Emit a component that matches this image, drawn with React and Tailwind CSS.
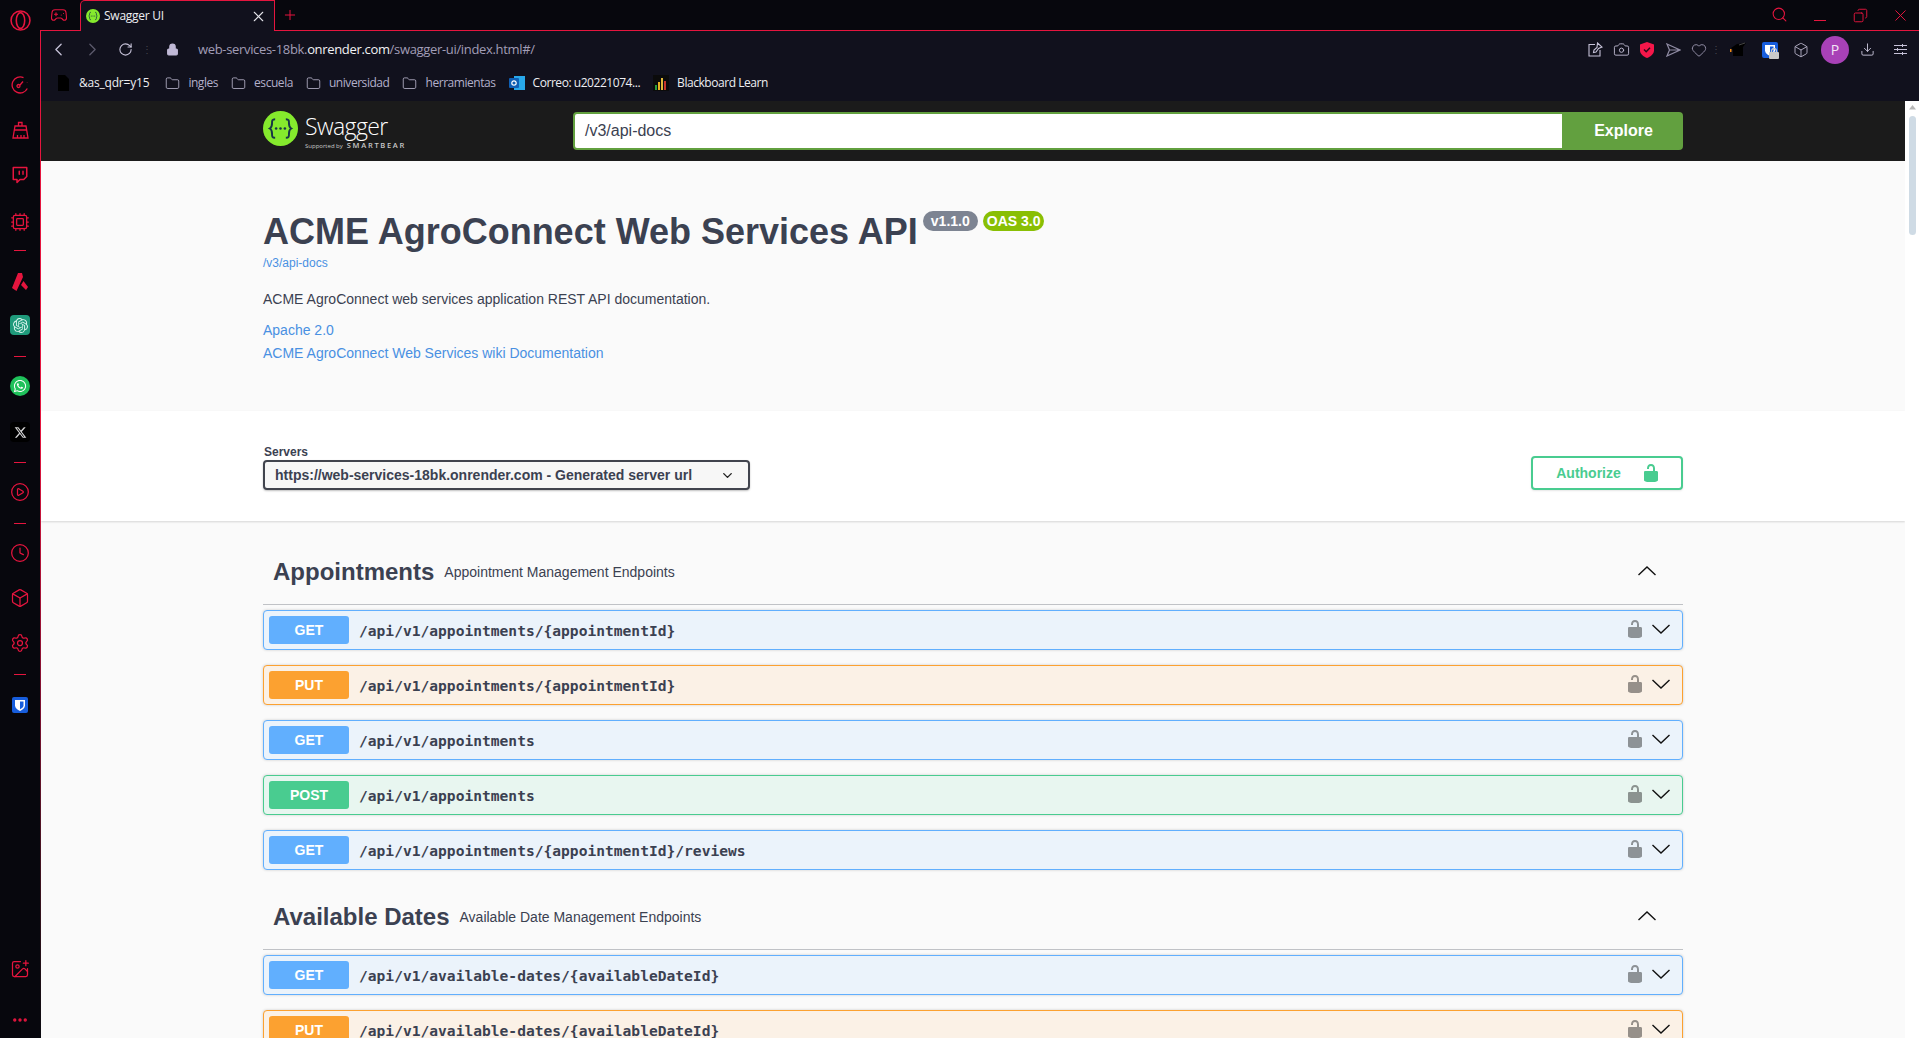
import { Twitch, Cpu, CirclePlay, Clock, Box, Settings, ImagePlus, Ellipsis, Gamepad2, X, Plus, ChevronLeft, ChevronRight, RotateCw, Lock, Folder, Search, Copy, Camera, Heart, Download, ChevronDown } from 'lucide-react';
import { FaWhatsapp, FaXTwitter } from 'react-icons/fa6';
import { SiOpenai } from 'react-icons/si';

const lockPath = "M15.8 8H14V5.6C14 2.703 12.665 1 10 1 7.334 1 6 2.703 6 5.6V6h2v-.801C8 3.754 8.797 3 10 3c1.203 0 2 .754 2 2.199V8H4c-.553 0-1 .646-1 1.199V17c0 .549.428 1.139.951 1.307l1.197.387C5.672 18.861 6.55 19 7.1 19h5.8c.549 0 1.428-.139 1.951-.307l1.196-.387c.524-.167.953-.757.953-1.306V9.199C17 8.646 16.352 8 15.8 8z";

const methodStyles = {
    GET: { block: 'border-[#61affe] bg-[#ebf3fb]', badge: 'bg-[#61affe]' },
    PUT: { block: 'border-[#fca130] bg-[#fbf1e6]', badge: 'bg-[#fca130]' },
    POST: { block: 'border-[#49cc90] bg-[#e8f6f0]', badge: 'bg-[#49cc90]' },
};

const appointments = [
    ['GET', '/api/v1/appointments/{appointmentId}'],
    ['PUT', '/api/v1/appointments/{appointmentId}'],
    ['GET', '/api/v1/appointments'],
    ['POST', '/api/v1/appointments'],
    ['GET', '/api/v1/appointments/{appointmentId}/reviews'],
];

const availableDates = [
    ['GET', '/api/v1/available-dates/{availableDateId}'],
    ['PUT', '/api/v1/available-dates/{availableDateId}'],
];

function SwaggerMark({ size }) {
    return (
        <svg width={size} height={size} viewBox="0 0 36 36">
            <circle cx="18" cy="18" r="18" fill="#85ea2d" />
            <path d="M12.5 8.5c-3.5 0-3.2 2-3.2 4.2 0 2.6-.3 4.2-2.3 5.3 2 1.1 2.3 2.700 2.300 5.300 0 2.200-.3 4.200 3.200 4.200M23.500 8.500c3.500 0 3.200 2 3.200 4.200 0 2.600.3 4.200 2.300 5.300-2 1.100-2.300 2.700-2.300 5.300 0 2.200.3 4.200-3.200 4.200" fill="none" stroke="#173647" strokeWidth="2" />
            <circle cx="13.500" cy="18" r="1.300" fill="#173647" />
            <circle cx="18" cy="18" r="1.300" fill="#173647" />
            <circle cx="22.500" cy="18" r="1.300" fill="#173647" />
        </svg>
    );
}

function BitwardenIcon({ size, locked }) {
    return (
        <div className="relative">
            <svg width={size} height={size} viewBox="0 0 16 16">
                <rect width="16" height="16" rx="2" fill="#175ddc" />
                <path d="M3 3h10v5.500c0 2.500-2.500 4.500-5 5.500-2.500-1-5-3-5-5.500z" fill="#fff" />
                <path d="M8 4.500h3.500v4c0 1.800-1.800 3-3.500 3.800z" fill="#175ddc" />
            </svg>
            {locked && (
                <svg className="absolute -bottom-[1px] -right-[1px]" width="10" height="11" viewBox="0 0 10 11">
                    <rect y="4" width="10" height="7" rx="1" fill="#c9c9c9" />
                    <path d="M2.500 5V3a2.500 2.500 0 0 1 5 0v2" fill="none" stroke="#c9c9c9" strokeWidth="1.300" />
                </svg>
            )}
        </div>
    );
}

function Sidebar() {
    const red = 'text-[#e5153e]';
    const slot = 'h-6 flex items-center justify-center';
    const rule = 'w-3 h-px bg-[#e5153e]';
    return (
        <div className="w-10 shrink-0 flex flex-col items-center bg-[#07070d]">
            <div className="h-10 flex items-center justify-center">
                <svg width="21" height="21" viewBox="0 0 20 20" fill="none" stroke="#e5153e" strokeWidth="1.500">
                    <circle cx="10" cy="10" r="9" />
                    <ellipse cx="10" cy="10" rx="4" ry="7.500" />
                </svg>
            </div>
            <div className={`mt-[33px] ${slot}`}>
                <svg width="18" height="18" viewBox="0 0 18 18" fill="none" stroke="#e5153e" strokeWidth="1.300">
                    <path d="M12.500 1.700A8 8 0 1 0 16.300 12.500" />
                    <path d="M15 4v.1M16.300 6.300v.1M17 9v.1" strokeWidth="1.500" />
                    <circle cx="7.500" cy="10" r="1.500" />
                    <path d="M9 9l3-3.500" />
                </svg>
            </div>
            <div className={`mt-[21px] ${slot}`}>
                <svg width="17" height="18" viewBox="0 0 17 18" fill="none" stroke="#e5153e" strokeWidth="1.300">
                    <path d="M6.500 5V1.500h3.500V5" />
                    <path d="M3 5h11l2 12H1zM2.300 9h12.400" />
                    <path d="M5.500 17v-3M9 17v-3M12 17v-3" />
                </svg>
            </div>
            <div className={`mt-[21px] ${slot} ${red}`}><Twitch size={18} strokeWidth={2} /></div>
            <div className={`mt-[23px] ${slot} ${red}`}><Cpu size={20} strokeWidth={1.5} /></div>
            <div className={`mt-[4px] ${slot}`}><div className={rule} /></div>
            <div className={`mt-[8px] ${slot}`}>
                <svg width="16" height="18" viewBox="0 0 16 18"><path d="M6 0h4l1 4L4.500 18 0 15zM11.500 8L16 14l-2 3-5-5z" fill="#e5153e" /></svg>
            </div>
            <div className={`mt-[19px] ${slot}`}>
                <div className="w-5 h-5 rounded-[4px] bg-[#1f9a7b] flex items-center justify-center text-[#d9f3ec]"><SiOpenai size={15} /></div>
            </div>
            <div className={`mt-[7px] ${slot}`}><div className={rule} /></div>
            <div className={`mt-[6px] ${slot}`}>
                <div className="w-5 h-5 rounded-full bg-[#1fc15b] flex items-center justify-center text-white"><FaWhatsapp size={14} /></div>
            </div>
            <div className={`mt-[22px] ${slot}`}>
                <div className="w-5 h-5 rounded-[4px] bg-black flex items-center justify-center text-[#d8d8d8]"><FaXTwitter size={13} /></div>
            </div>
            <div className={`mt-[6px] ${slot}`}><div className={rule} /></div>
            <div className={`mt-[6px] ${slot} ${red}`}><CirclePlay size={20} strokeWidth={1.5} /></div>
            <div className={`mt-[7px] ${slot}`}><div className={rule} /></div>
            <div className={`mt-[6px] ${slot} ${red}`}><Clock size={20} strokeWidth={1.5} /></div>
            <div className={`mt-[21px] ${slot} ${red}`}><Box size={20} strokeWidth={1.5} /></div>
            <div className={`mt-[21px] ${slot} ${red}`}><Settings size={20} strokeWidth={1.5} /></div>
            <div className={`mt-[7px] ${slot}`}><div className={rule} /></div>
            <div className={`mt-[7px] ${slot}`}><BitwardenIcon size={16} /></div>
            <div className={`mt-auto ${slot} ${red}`}><ImagePlus size={20} strokeWidth={1.5} /></div>
            <div className={`mt-[27px] mb-[6px] ${slot} ${red}`}><Ellipsis size={18} strokeWidth={2.5} /></div>
        </div>
    );
}

function TabStrip() {
    return (
        <div className="h-[31px] shrink-0 flex items-end border-b border-[#e5153e] bg-[#07070d]">
            <div className="w-[38px] mr-[2px] h-[30px] flex items-center justify-center text-[#e5153e]">
                <Gamepad2 size={18} strokeWidth={1.5} />
            </div>
            <div className="w-[195px] h-[31px] -mb-px flex items-center rounded-tl-[5px] border-x border-t border-[#e5153e] bg-[#11111d] pl-[5px]">
                <SwaggerMark size={14} />
                <span className="ml-[4px] text-[12px] tracking-[-0.25px] text-[#eeeef2] font-['Open_Sans',sans-serif]">Swagger UI</span>
                <X className="ml-auto mr-[7px] text-[#e4e4ea]" size={17} strokeWidth={1.5} />
            </div>
            <div className="h-[30px] flex items-center ml-[7px] text-[#e5153e]">
                <Plus size={16} strokeWidth={1.5} />
            </div>
            <div className="ml-auto h-[30px] flex items-center text-[#e5153e]">
                <div className="w-[40px] flex justify-center -mt-[1px] pr-[3px]"><Search size={17} strokeWidth={1.5} /></div>
                <div className="w-[40px] flex justify-center mt-[11px] pr-[2px]"><div className="w-3 h-[1.5px] bg-[#e5153e]" /></div>
                <div className="w-[40px] flex justify-center pr-[2px]"><Copy size={15} strokeWidth={1.5} className="-scale-x-100" /></div>
                <div className="w-[38px] flex justify-center"><X size={19} strokeWidth={1.25} /></div>
            </div>
        </div>
    );
}

function Bookmark({ label }) {
    return (
        <div className="flex items-center gap-[8px]">
            <Folder size={15} strokeWidth={1.25} className="text-[#c3bfd6]" />
            <span className="text-[#b3afca]">{label}</span>
        </div>
    );
}

function Toolbar() {
    const box = 'flex items-center justify-center h-full';
    return (
        <div className="shrink-0 bg-[#11111d] font-['Open_Sans',sans-serif]">
            <div className="h-[37px] flex items-center text-[#c6c2d8]">
                <div className={`w-[34px] ${box}`}><ChevronLeft size={21} strokeWidth={1.5} /></div>
                <div className={`w-[34px] ${box} text-[#5c5a6c]`}><ChevronRight size={21} strokeWidth={1.5} /></div>
                <div className={`w-[32px] mr-[2px] ${box}`}><RotateCw size={15} strokeWidth={1.75} /></div>
                <div className={`w-[8px] ${box} text-[#45434f] text-[10px]`}>⋮</div>
                <div className={`w-[42px] mr-[2px] ${box}`}><Lock size={13} strokeWidth={2} fill="#c0b9d6" className="text-[#c0b9d6]" /></div>
                <div className="ml-[3px] mt-px text-[13px] tracking-[-0.33px] text-[#a19db6]">
                    web-services-18bk.<span className="text-[#f1f1f4]">onrender.com</span>/swagger-ui/index.html#/
                </div>
                <div className="ml-auto flex items-center h-full text-[#c6c2d8]">
                    <div className={`w-[26px] ${box}`}>
                        <svg width="15" height="15" viewBox="0 0 15 15" fill="none" stroke="currentColor" strokeWidth="1.100"><path d="M7 2.500H1v11.500h11V8" /><path d="M9.500 1l4.500 4-3.500 1.500-2.500 3.500-2.500.5.500-2.500 3-2.500z" /></svg>
                    </div>
                    <div className={`w-[26px] ${box}`}><Camera size={17} strokeWidth={1.25} /></div>
                    <div className={`w-[26px] ${box}`}>
                        <svg width="14" height="16" viewBox="0 0 14 16"><path d="M7 0l7 2.500v6c0 3.500-3.500 6-7 7.500-3.500-1.500-7-4-7-7.500v-6z" fill="#f5174a" /><path d="M4 7.500l2.200 2.200L10 5.800" fill="none" stroke="#2a0a18" strokeWidth="1.500" /></svg>
                    </div>
                    <div className={`w-[26px] ${box} text-[#8f8ba3]`}>
                        <svg width="15" height="14" viewBox="0 0 15 14" fill="none" stroke="currentColor" strokeWidth="1.200"><path d="M1 1l13 6-13 6 2.500-6zM3.500 7H14" /></svg>
                    </div>
                    <div className={`w-[26px] ${box} text-[#8f8ba3]`}><Heart size={16} strokeWidth={1.5} /></div>
                    <div className={`w-[8px] ${box} text-[#45434f] text-[10px]`}>⋮</div>
                    <div className={`w-[36px] ${box}`}>
                        <svg width="17" height="16" viewBox="0 0 17 16"><path d="M1 6l6-4 9-1-3 4v9H3V8z" fill="#000" /><path d="M0 7h1.500v3H0z" fill="#f08a14" /><path d="M9 3l6-2" stroke="#444" /></svg>
                    </div>
                    <div className={`w-[28px] ${box}`}><BitwardenIcon size={16} locked /></div>
                    <div className={`w-[34px] ${box}`}><Box size={16} strokeWidth={1.25} /></div>
                    <div className={`w-[34px] ${box}`}>
                        <div className="w-[28px] h-[28px] rounded-full bg-[#a841b7] flex items-center justify-center text-[14px] text-[#f3e6f5]">P</div>
                    </div>
                    <div className={`w-[30px] ${box}`}><Download size={15} strokeWidth={1.5} /></div>
                    <div className={`w-[37px] ${box}`}>
                        <svg width="13" height="11" viewBox="0 0 13 11" fill="none" stroke="currentColor" strokeWidth="1"><path d="M0 1.500h13M0 5.500h13M0 9.500h13M8.500 0v3M3.500 4v3M8.500 8v3" /></svg>
                    </div>
                </div>
            </div>
            <div className="h-[33px] pb-[3px] pl-[14px] flex items-center gap-[13px] text-[12px] tracking-[-0.45px]">
                <div className="flex items-center gap-[8px] mr-[3px]">
                    <svg width="16" height="16" viewBox="0 0 16 16"><path d="M3 0h7l4 4v12H3z" fill="#000" /></svg>
                    <span className="text-[#eeeef2] tracking-[-0.2px]">&as_qdr=y15</span>
                </div>
                <Bookmark label="ingles" />
                <Bookmark label="escuela" />
                <Bookmark label="universidad" />
                <Bookmark label="herramientas" />
                <div className="flex items-center gap-[8px]">
                    <svg width="16" height="16" viewBox="0 0 16 16">
                        <rect x="5" y="1" width="11" height="14" fill="#28a8ea" />
                        <rect x="0" y="3" width="10" height="10" rx="1" fill="#0f5fb4" />
                        <circle cx="5" cy="8" r="2.200" fill="none" stroke="#fff" strokeWidth="1.200" />
                    </svg>
                    <span className="text-[#eeeef2]">Correo: u20221074...</span>
                </div>
                <div className="flex items-center gap-[8px]">
                    <svg width="16" height="16" viewBox="0 0 16 16">
                        <rect width="16" height="16" fill="#0b0b0b" />
                        <rect x="2" y="10" width="2" height="5" fill="#2a9d3a" />
                        <rect x="5" y="7" width="2" height="8" fill="#e8b021" />
                        <rect x="8" y="3" width="2" height="12" fill="#e2b93b" />
                        <rect x="11" y="6" width="2" height="9" fill="#c7352c" />
                    </svg>
                    <span className="text-[#eeeef2]">Blackboard Learn</span>
                </div>
            </div>
        </div>
    );
}

function Topbar() {
    return (
        <div className="h-[60px] shrink-0 bg-[#1b1b1b]">
            <div className="w-[1420px] mx-auto h-full flex items-center">
                <div className="flex items-start">
                    <SwaggerMark size={35} />
                    <div className="ml-[7px] -mt-[1px] text-white font-['Open_Sans',sans-serif]">
                        <div className="text-[23px] leading-[32px] font-light tracking-[-0.6px]">Swagger</div>
                        <div className="flex items-center -mt-[1px] h-[10px] text-[#c9c9c9]">
                            <span className="text-[6px] leading-none">Supported by</span>
                            <span className="ml-[4px] text-[7.5px] leading-none font-semibold tracking-[1.7px]">SMARTBEAR</span>
                        </div>
                    </div>
                </div>
                <div className="ml-auto w-[1110px] h-[38px] flex">
                    <div className="flex-1 flex items-center bg-white border-2 border-[#62a03f] rounded-l-[4px] pl-[10px] pr-2 text-[16px] text-[#3b4151]">/v3/api-docs</div>
                    <div className="w-[119px] flex items-center justify-center bg-[#62a03f] rounded-r-[4px] text-[16px] font-bold text-white">Explore</div>
                </div>
            </div>
        </div>
    );
}

function Info() {
    return (
        <div className="h-[250px] bg-[#fafafa]">
            <div className="w-[1420px] mx-auto pt-[51px] text-[#3b4151]">
                <div className="flex items-start h-[40px]">
                    <h1 className="text-[36px] leading-[40px] font-bold">ACME AgroConnect Web Services API</h1>
                    <span className="ml-[5px] h-5 -mt-[1px] px-2 rounded-[57px] bg-[#7d8492] text-[14px] leading-5 font-bold text-white">v1.1.0</span>
                    <span className="ml-[5px] h-5 -mt-[1px] px-1 rounded-[57px] bg-[#89bf04] text-[14px] leading-5 font-bold text-white">OAS 3.0</span>
                </div>
                <div className="mt-[3px] text-[12px] leading-4 text-[#4990e2]">/v3/api-docs</div>
                <p className="mt-[18px] text-[14px] leading-5">ACME AgroConnect web services application REST API documentation.</p>
                <div className="mt-[11px] text-[14px] leading-5 text-[#4990e2]">Apache 2.0</div>
                <div className="mt-[3px] text-[14px] leading-5 text-[#4990e2]">ACME AgroConnect Web Services wiki Documentation</div>
            </div>
        </div>
    );
}

function Servers() {
    return (
        <div className="h-[110px] bg-white shadow-[0_1px_2px_0_rgba(0,0,0,0.15)] relative">
            <div className="w-[1420px] mx-auto h-full flex justify-between items-start">
                <div className="pt-[34px]">
                    <div className="pl-px text-[12px] leading-[14px] font-bold text-[#3b4151]">Servers</div>
                    <div className="mt-px w-[487px] h-[30px] flex items-center justify-between rounded-[4px] border-2 border-[#41444e] bg-[#f7f7f7] pl-[10px] pr-[13px] shadow-[0_1px_2px_0_rgba(0,0,0,0.25)] text-[14px] font-bold text-[#3b4151]">
                        https://web-services-18bk.onrender.com - Generated server url
                        <ChevronDown size={15} strokeWidth={2.25} className="text-[#222]" />
                    </div>
                </div>
                <div className="mt-[45px] w-[152px] h-[34px] flex items-center justify-center gap-[20px] rounded-[4px] border-2 border-[#49cc90] bg-white pl-[3px] shadow-[0_1px_2px_rgba(0,0,0,0.1)] text-[14px] font-bold text-[#49cc90]">
                    <span className="mt-px">Authorize</span>
                    <svg width="20" height="20" viewBox="0 0 20 20" fill="#49cc90"><path d={lockPath} /></svg>
                </div>
            </div>
        </div>
    );
}

function Operation({ method, path }) {
    const s = methodStyles[method];
    return (
        <div className={`h-[40px] flex items-center rounded-[4px] border px-[5px] shadow-[0_0_3px_rgba(0,0,0,0.19)] ${s.block}`}>
            <div className={`w-[80px] h-[28px] flex items-center justify-center rounded-[3px] text-[14px] font-bold text-white ${s.badge}`}>{method}</div>
            <div className="ml-[10px] mt-[2px] text-[14.6px] font-bold text-[#3b4151] font-['DejaVu_Sans_Mono',monospace]">{path}</div>
            <svg className="ml-auto -mt-[2px]" width="20" height="20" viewBox="0 0 20 20" fill="rgba(0,0,0,0.4)"><path d={lockPath} /></svg>
            <svg className="ml-[6px] mr-[6px] -mt-[3px]" width="20" height="20" viewBox="0 0 20 20" fill="none" stroke="#111" strokeWidth="1.400"><path d="M1.500 6l8.500 8 8.500-8" /></svg>
        </div>
    );
}

function Section({ title, description, items }) {
    return (
        <div className="mb-[16px]">
            <div className="h-[64px] pb-[2px] flex items-center border-b border-[#3b4151]/30 pl-[10px] text-[#3b4151]">
                <span className="text-[24px] font-bold">{title}</span>
                <span className="ml-[10px] text-[14px] mt-[1px]">{description}</span>
                <svg className="ml-auto mr-[26px] -mt-[1px]" width="20" height="20" viewBox="0 0 20 20" fill="none" stroke="#111" strokeWidth="1.400"><path d="M1.500 14l8.500-8 8.500 8" /></svg>
            </div>
            <div className="mt-[5px] flex flex-col gap-[15px]">
                {items.map(([method, path], i) => (
                    <Operation key={i} method={method} path={path} />
                ))}
            </div>
        </div>
    );
}

function Scrollbar() {
    return (
        <div className="w-[14px] shrink-0 bg-white flex flex-col pl-[4px]">
            <svg className="mt-[3px]" width="7" height="7" viewBox="0 0 7 7" fill="#b8b8b8"><path d="M3.500 1L7 5.500H0z" /></svg>
            <div className="mt-[5px] w-[7px] h-[119px] rounded-full bg-[#cfdbe5]" />
        </div>
    );
}

export default function App() {
    return (
        <div className="h-screen w-full flex overflow-hidden bg-[#07070d] font-['Liberation_Sans',Arial,sans-serif]">
            <Sidebar />
            <div className="flex-1 min-w-0 flex flex-col">
                <TabStrip />
                <div className="flex-1 min-h-0 flex">
                    <div className="w-px shrink-0 bg-linear-to-b from-[#e5153e] from-40% via-[#7a1030] via-68% to-[#0a0a10]" />
                    <div className="flex-1 min-w-0 flex flex-col">
                        <Toolbar />
                        <div className="flex-1 min-h-0 flex">
                            <div className="flex-1 min-w-0 bg-[#fafafa] overflow-hidden">
                                <Topbar />
                                <Info />
                                <Servers />
                                <div className="w-[1420px] mx-auto pt-[20px]">
                                    <Section title="Appointments" description="Appointment Management Endpoints" items={appointments} />
                                    <Section title="Available Dates" description="Available Date Management Endpoints" items={availableDates} />
                                </div>
                            </div>
                            <Scrollbar />
                        </div>
                    </div>
                </div>
            </div>
        </div>
    );
}
